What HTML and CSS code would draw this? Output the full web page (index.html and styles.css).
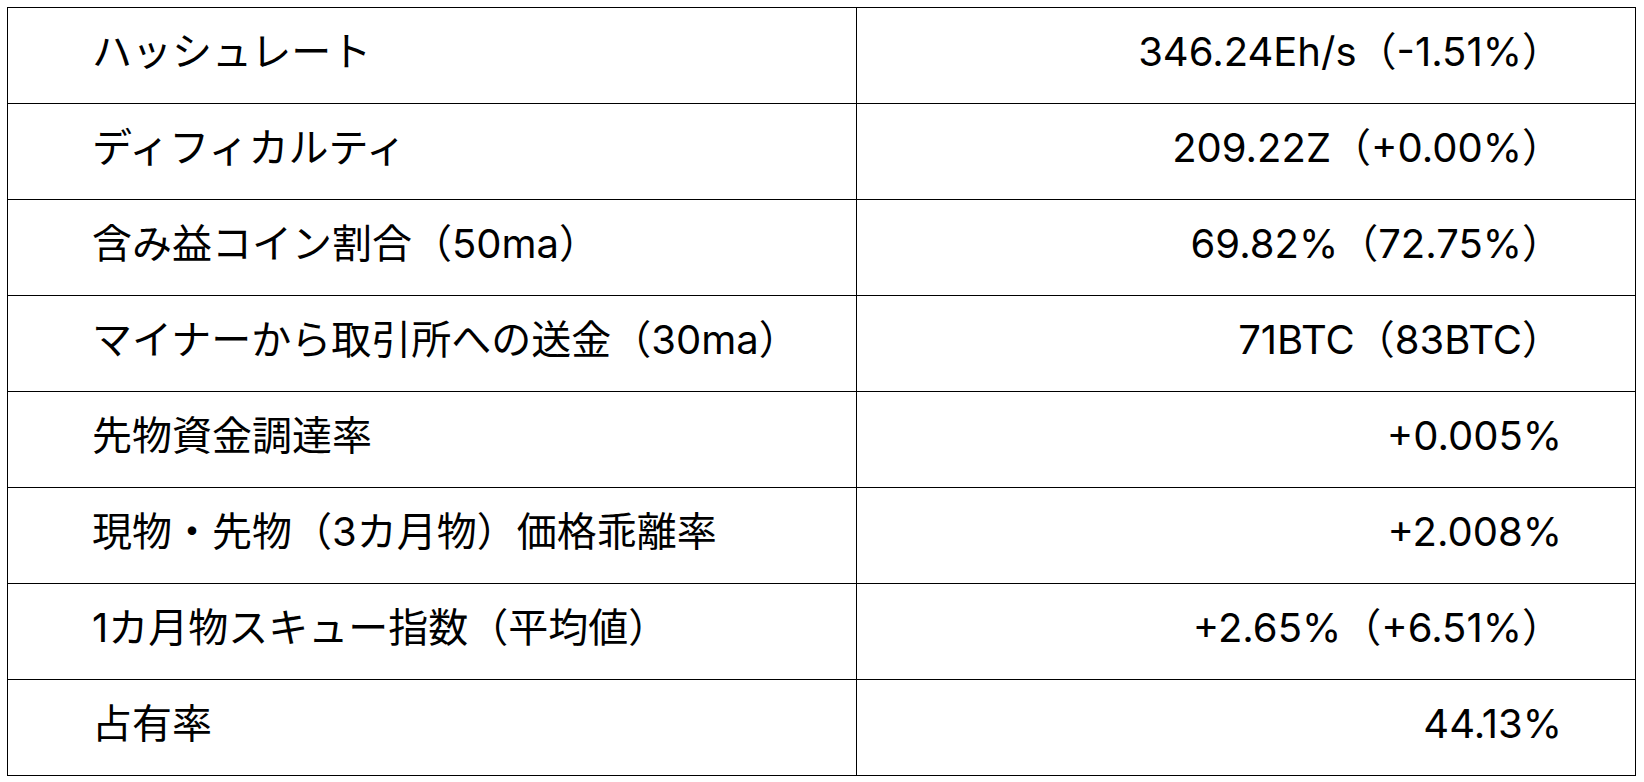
FILE: index.html
```html
<!DOCTYPE html>
<html lang="ja">
<head>
<meta charset="utf-8">
<link rel="stylesheet" href="styles.css">
</head>
<body>
<table class="stats">
  <colgroup><col class="c-label"><col class="c-value"></colgroup>
  <tbody>
    <tr><td class="label">ハッシュレート</td><td class="value">346.24Eh/s（-1.51%）</td></tr>
    <tr><td class="label">ディフィカルティ</td><td class="value">209.22Z（+0.00%）</td></tr>
    <tr><td class="label">含み益コイン割合（50ma）</td><td class="value">69.82%（72.75%）</td></tr>
    <tr><td class="label">マイナーから取引所への送金（30ma）</td><td class="value">71BTC（83BTC）</td></tr>
    <tr><td class="label">先物資金調達率</td><td class="value">+0.005%</td></tr>
    <tr><td class="label">現物・先物（3カ月物）価格乖離率</td><td class="value">+2.008%</td></tr>
    <tr><td class="label">1カ月物スキュー指数（平均値）</td><td class="value">+2.65%（+6.51%）</td></tr>
    <tr><td class="label">占有率</td><td class="value">44.13%</td></tr>
  </tbody>
</table>
</body>
</html>
```
FILE: styles.css
```css
html, body {
  margin: 0;
  padding: 0;
  background: #fff;
}
body {
  padding: 7px;
  font-family: Inter, "Noto Sans CJK JP", sans-serif;
  color: #000;
}
.stats {
  border-collapse: collapse;
  table-layout: fixed;
  width: 1628px;
}
.c-label { width: 849px; }
.c-value { width: 779px; }
.stats td {
  border: 1px solid #000;
  height: 96px;
  padding: 0 0 7px 0;
  font-size: 40px;
  line-height: 1;
  vertical-align: middle;
  box-sizing: border-box;
  white-space: nowrap;
}
.stats td.label {
  padding-left: 84px;
  text-align: left;
}
.stats td.value {
  padding-right: 73px;
  text-align: right;
}
```
